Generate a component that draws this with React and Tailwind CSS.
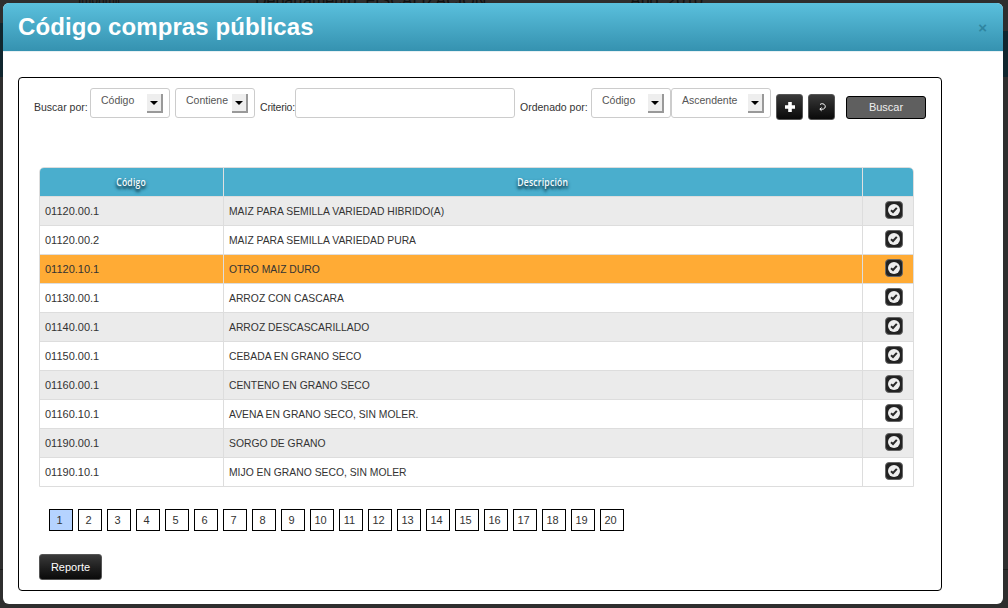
import React from "react";

const rows = [
  ["01120.00.1", "MAIZ PARA SEMILLA VARIEDAD HIBRIDO(A)"],
  ["01120.00.2", "MAIZ PARA SEMILLA VARIEDAD PURA"],
  ["01120.10.1", "OTRO MAIZ DURO"],
  ["01130.00.1", "ARROZ CON CASCARA"],
  ["01140.00.1", "ARROZ DESCASCARILLADO"],
  ["01150.00.1", "CEBADA EN GRANO SECO"],
  ["01160.00.1", "CENTENO EN GRANO SECO"],
  ["01160.10.1", "AVENA EN GRANO SECO, SIN MOLER."],
  ["01190.00.1", "SORGO DE GRANO"],
  ["01190.10.1", "MIJO EN GRANO SECO, SIN MOLER"],
];

const pages = Array.from({ length: 20 }, (_, i) => i + 1);

const Select = ({ label, width }) => (
  <div className={`${width} h-[30px] shrink-0 bg-white border border-[#ccc] rounded-[3px] relative text-[10.5px] text-[#555]`}>
    <span className="absolute left-[10px] top-[4px]">{label}</span>
    <span className="absolute right-[6px] top-[5px] w-[16px] h-[19px] bg-[#eee] border-r-2 border-b-2 border-[#999] flex items-center justify-center">
      <span className="w-0 h-0 border-x-[4px] border-x-transparent border-t-[4px] border-t-black" />
    </span>
  </div>
);

const CheckIcon = () => (
  <svg width="18" height="18" viewBox="0 0 18 18">
    <rect x="0.5" y="0.5" width="17" height="17" rx="3.5" fill="#222" stroke="#666" />
    <circle cx="9" cy="9" r="6" fill="#eee" />
    <path d="M6 9.2 L8 11 L11.8 6.8" fill="none" stroke="#2a2a2a" strokeWidth="2" />
  </svg>
);

const IconButton = ({ children }) => (
  <button className="w-[27px] h-[26px] shrink-0 rounded-[3px] border border-[#555] bg-linear-to-b from-[#3a3a3a] to-[#0a0a0a] flex items-center justify-center">
    {children}
  </button>
);

export default function App() {
  return (
    <div className="w-[1008px] h-[608px] relative overflow-hidden bg-[#2e2e2e] pt-[3px] pl-[3px] font-['Liberation_Sans',sans-serif]">
      {/* page behind the modal, only the edges show */}
      <span className="absolute left-[255px] top-[-11px] text-[16px] text-[#111] whitespace-nowrap">Departamento: FISCALIZACION</span>
      <span className="absolute left-[630px] top-[-11px] text-[16px] text-[#111] whitespace-nowrap">Año: 2010</span>
      <span className="absolute left-[78px] top-[-9px] text-[12px] text-[#111] whitespace-nowrap">Imprimir</span>
      <div className="absolute left-0 right-0 top-[569px] h-px bg-[#1c1c1c]" />
      <div className="absolute right-0 top-[31px] w-[5px] h-[46px] bg-[#10262e]" />
      <div className="absolute left-0 top-[23px] w-[3px] h-[54px] bg-[#10262e]" />

      <div className="relative w-[1000px] h-[601px] bg-white rounded-[6px] overflow-hidden">
        <div className="h-[49px] bg-linear-to-b from-[#5ac0dd] to-[#3592b0] border-b border-[#e8f0f3] flex items-center justify-between pl-[16px] pr-[16px]">
          <h1 className="text-[24px] font-bold text-white leading-none tracking-[0.1px] -ml-px">Código compras públicas</h1>
          <span className="text-[#2f85a0] text-[15px] font-bold leading-none">×</span>
        </div>

        <div className="ml-[15px] mt-[25px] w-[924px] h-[514px] border border-black rounded-[4px] pl-[15px] pt-[10px]">
          <div className="flex items-start text-[10.5px] text-[#333] h-[30px]">
            <span className="mt-[12px] w-[56px] shrink-0 whitespace-nowrap">Buscar por:</span>
            <Select label="Código" width="w-[80px]" />
            <div className="w-[5px] shrink-0" />
            <Select label="Contiene" width="w-[80px]" />
            <span className="mt-[12px] ml-[5px] w-[35px] shrink-0 whitespace-nowrap tracking-[-0.2px]">Criterio:</span>
            <div className="w-[220px] h-[30px] shrink-0 border border-[#ccc] rounded-[3px]" />
            <span className="mt-[12px] ml-[5px] w-[71px] shrink-0 whitespace-nowrap">Ordenado por:</span>
            <Select label="Código" width="w-[80px]" />
            <Select label="Ascendente" width="w-[100px]" />
            <div className="flex gap-[5px] ml-[5px] mt-[6px]">
              <IconButton>
                <svg width="12" height="12" viewBox="0 0 12 12">
                  <path d="M4.2 1h3.6v3.2H11v3.6H7.8V11H4.2V7.8H1V4.2h3.2z" fill="#fff" />
                </svg>
              </IconButton>
              <IconButton>
                <svg width="10" height="10" viewBox="0 0 10 10" fill="none" stroke="#fff" strokeWidth="1">
                  <path d="M3 2.5 A3 2.6 0 0 1 8 3.5 A3 2.6 0 0 1 5 7.2 H3" />
                  <path d="M4.6 5.6 L2.8 7.2 L4.6 8.8" />
                </svg>
              </IconButton>
            </div>
            <button className="ml-[11px] mt-[8px] w-[80px] h-[23px] shrink-0 rounded-[3px] border border-black bg-[#5f5f5f] text-[#eee] text-[11px]">
              Buscar
            </button>
          </div>

          <div className="mt-[49px] ml-[5px] w-[875px] border border-[#ddd] rounded-t-[5px] overflow-hidden text-[10.35px] text-[#333]">
            <div className="flex h-[28px] bg-[#4aaecd] text-[#f4fbfd] font-['Open_Sans',sans-serif] font-semibold text-[11px] tracking-[0.3px] [text-shadow:0_3px_3px_#174a5c,0_2px_4px_#174a5c]">
              <div className="w-[184px] border-r border-[#e0e0e0] flex items-center justify-center">
                <span className="inline-block scale-x-[0.78]">Código</span>
              </div>
              <div className="w-[639px] border-r border-[#e0e0e0] flex items-center justify-center">
                <span className="inline-block scale-x-[0.78]">Descripción</span>
              </div>
              <div className="flex-1" />
            </div>
            {rows.map(([code, desc], i) => (
              <div
                key={code}
                className={`flex h-[29px] border-t border-[#ddd] ${i === 2 ? "bg-[#ffab35]" : i % 2 === 0 ? "bg-[#ebebeb]" : "bg-white"}`}
              >
                <div className="w-[184px] border-r border-[#ddd] pl-[5px] flex items-center text-[11px]">{code}</div>
                <div className="w-[639px] border-r border-[#ddd] pl-[5px] pt-[2px] flex items-center">{desc}</div>
                <div className="flex-1 flex items-center justify-end pr-[10px] pb-[2px]">
                  <CheckIcon />
                </div>
              </div>
            ))}
          </div>

          <div className="flex gap-[5px] ml-[15px] mt-[22px]">
            {pages.map((p) => (
              <div
                key={p}
                className={`w-[24px] h-[22px] border border-black flex items-center justify-center pr-[3px] text-[11px] text-[#333] ${p === 1 ? "bg-[#b5d3ff]" : "bg-white"}`}
              >
                {p}
              </div>
            ))}
          </div>

          <button className="block mt-[23px] ml-[5px] w-[63px] h-[26px] rounded-[3px] border border-[#555] bg-linear-to-b from-[#3a3a3a] to-[#0a0a0a] text-white text-[11px]">
            Reporte
          </button>
        </div>
      </div>
    </div>
  );
}
